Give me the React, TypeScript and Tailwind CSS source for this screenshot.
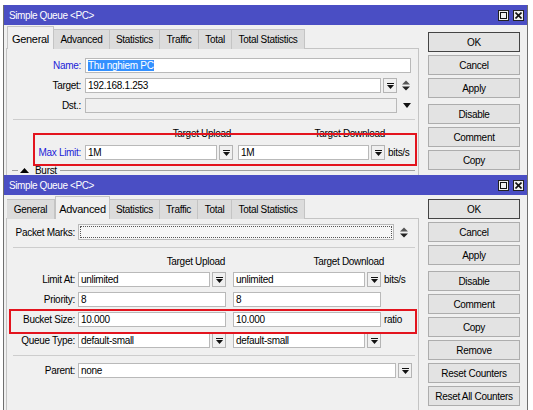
import React from "react";

const blueLabel = "text-[#1c1cd8]";

function DropBtn() {
  return (
    <div className="flex h-[15px] w-[14px] shrink-0 items-center justify-center border border-[#b4b4b4] bg-[#f0f0f0]">
      <svg width="7" height="6" viewBox="0 0 7 6">
        <rect x="0" y="0" width="7" height="1" fill="#111" />
        <path d="M0 2h7L3.5 6z" fill="#111" />
      </svg>
    </div>
  );
}

function UpDown() {
  return (
    <svg width="8" height="11" viewBox="0 0 8 11" className="shrink-0">
      <path d="M0 4.5h8L4 0.5z" fill="#555" />
      <path d="M0 6.5h8L4 10.5z" fill="#222" />
    </svg>
  );
}

function Field({ w, children, gray }: { w: string; children?: React.ReactNode; gray?: boolean }) {
  return (
    <div
      className={`h-[15px] shrink-0 overflow-hidden whitespace-nowrap border border-[#b9b9b9] pl-[2px] leading-[13px] ${gray ? "bg-[#f0f0f0]" : "bg-white"} ${w}`}
    >
      {children}
    </div>
  );
}

function Label({ w, children, blue }: { w: string; children: React.ReactNode; blue?: boolean }) {
  return <div className={`shrink-0 pr-[1px] text-right whitespace-nowrap ${blue ? blueLabel : ""} ${w}`}>{children}</div>;
}

function Tab({ label, w, active }: { label: string; w: string; active?: boolean }) {
  if (active) {
    return (
      <div className={`relative z-10 flex h-[23px] shrink-0 justify-center border-x border-t border-[#c4c4c4] bg-[#f0f0f0] pt-[4px] text-[11px] ${w}`}>
        {label}
      </div>
    );
  }
  return (
    <div className={`flex h-[20px] shrink-0 items-center justify-center border-t border-r border-[#c4c4c4] bg-[#dcdcdc] pb-px ${w}`}>
      {label}
    </div>
  );
}

function TitleBar() {
  return (
    <div className="flex h-[20px] items-center bg-[#4a4ec4] pl-[5px] pr-[3px] text-white tracking-[-0.4px]">
      <span>Simple Queue &lt;PC&gt;</span>
      <div className="ml-auto flex gap-[4px]">
        <div className="flex h-[11px] w-[11px] items-center justify-center border border-[#222] bg-[#f0f0f0]">
          <div className="h-[7px] w-[7px] border border-[#111]" />
        </div>
        <div className="flex h-[11px] w-[11px] items-center justify-center border border-[#222] bg-[#f0f0f0]">
          <svg width="7" height="7" viewBox="0 0 7 7">
            <path d="M0.5 0.5L6.5 6.5M6.5 0.5L0.5 6.5" stroke="#111" strokeWidth="1.6" />
          </svg>
        </div>
      </div>
    </div>
  );
}

function Btn({ children, main, extra }: { children: React.ReactNode; main?: boolean; extra?: boolean }) {
  return (
    <div
      className={`flex h-[20px] w-[92px] items-center justify-center border bg-[#e3e3e3] ${main ? "border-[#444]" : "border-[#adadad]"} ${extra ? "mt-[3px]" : ""}`}
    >
      {children}
    </div>
  );
}

function Sep() {
  return <div className="ml-[6px] mr-[3px] h-px bg-[#cdcdcd]" />;
}

function GeneralWindow() {
  return (
    <div className="h-[170px] w-[525px] overflow-hidden border-x border-[#6f6f6f] bg-[#f0f0f0]">
      <TitleBar />
      <div className="flex">
        <div className="w-[415px] pl-[2px]">
          <div className="flex h-[24px] items-end pl-[1px]">
            <Tab label="General" w="w-[47px]" active />
            <Tab label="Advanced" w="w-[56px]" />
            <Tab label="Statistics" w="w-[50px]" />
            <Tab label="Traffic" w="w-[39px]" />
            <Tab label="Total" w="w-[33px]" />
            <Tab label="Total Statistics" w="w-[73px]" />
          </div>
          <div className="-mt-px h-[200px] w-[413px] border border-[#c4c4c4] bg-[#f0f0f0]">
            <div className="mt-[9px] flex h-[15px] items-center">
              <Label w="w-[75px]" blue>Name:</Label>
              <div className="ml-[3px]">
                <Field w="w-[326px]">
                  <span className="bg-[#3390ff] text-white">Thu nghiem PC</span>
                </Field>
              </div>
            </div>
            <div className="mt-[5px] flex h-[15px] items-center">
              <Label w="w-[75px]">Target:</Label>
              <div className="ml-[3px] flex items-center">
                <Field w="w-[296px]">192.168.1.253</Field>
                <div className="ml-[2px]"><DropBtn /></div>
                <div className="ml-[5px] flex"><UpDown /></div>
              </div>
            </div>
            <div className="mt-[5px] flex h-[15px] items-center">
              <Label w="w-[75px]">Dst.:</Label>
              <div className="ml-[3px] flex items-center">
                <Field w="w-[312px]" gray />
                <svg width="8" height="5" viewBox="0 0 8 5" className="ml-[6px]">
                  <path d="M0 0h8L4 5z" fill="#111" />
                </svg>
              </div>
            </div>
            <div className="mt-[6px]"><Sep /></div>
            <div className="mt-[8px] flex h-[11px] leading-[11px]">
              <div className="ml-[78px] w-[148px] pr-[2px] text-right">Target Upload</div>
              <div className="ml-[5px] w-[147px] text-right">Target Download</div>
            </div>
            <div className="mt-[6px] flex h-[15px] items-center">
              <Label w="w-[75px]" blue>Max Limit:</Label>
              <div className="ml-[3px] flex items-center">
                <Field w="w-[132px]">1M</Field>
                <div className="ml-[2px]"><DropBtn /></div>
                <div className="ml-[5px]"><Field w="w-[131px]">1M</Field></div>
                <div className="ml-[2px]"><DropBtn /></div>
                <span className="ml-[3px]">bits/s</span>
              </div>
            </div>
            <div className="mt-[5px] flex h-[11px] items-center pl-[5px]">
              <div className="h-px w-[6px] bg-[#a0a0a0]" />
              <svg width="9" height="5" viewBox="0 0 9 5" className="ml-[2px]">
                <path d="M0 5h9L4.5 0z" fill="#000" />
              </svg>
              <span className="ml-[6px] leading-[11px]">Burst</span>
              <div className="ml-[3px] mr-[3px] h-px flex-1 bg-[#a0a0a0]" />
            </div>
          </div>
        </div>
        <div className="ml-[9px] mt-[7px] flex flex-col gap-[3px]">
          <Btn main>OK</Btn>
          <Btn>Cancel</Btn>
          <Btn>Apply</Btn>
          <Btn extra>Disable</Btn>
          <Btn>Comment</Btn>
          <Btn>Copy</Btn>
        </div>
      </div>
    </div>
  );
}

function AdvancedWindow() {
  return (
    <div className="h-[235px] w-[525px] overflow-hidden border-x border-[#6f6f6f] bg-[#f0f0f0]">
      <TitleBar />
      <div className="flex">
        <div className="w-[415px] pl-[2px]">
          <div className="flex h-[24px] items-end pl-[1px]">
            <Tab label="General" w="w-[48px]" />
            <Tab label="Advanced" w="w-[55px]" active />
            <Tab label="Statistics" w="w-[50px]" />
            <Tab label="Traffic" w="w-[38px]" />
            <Tab label="Total" w="w-[34px]" />
            <Tab label="Total Statistics" w="w-[73px]" />
          </div>
          <div className="-mt-px h-[220px] w-[413px] border border-[#c4c4c4] bg-[#f0f0f0]">
            <div className="mt-[5px] flex h-[16px] items-center">
              <Label w="w-[69px]">Packet Marks:</Label>
              <div className="ml-[2px] flex items-center">
                <div className="h-[16px] w-[316px] border border-[#b9b9b9] bg-[#f6f6f6] p-px">
                  <div className="h-full w-full border border-dotted border-[#555]" />
                </div>
                <div className="ml-[6px] flex"><UpDown /></div>
              </div>
            </div>
            <div className="mt-[7px]"><Sep /></div>
            <div className="mt-[8px] flex h-[11px] leading-[11px]">
              <div className="ml-[71px] w-[148px] pr-px text-right">Target Upload</div>
              <div className="ml-[7px] w-[151px] text-right">Target Download</div>
            </div>
            <div className="mt-[5px] flex h-[15px] items-center">
              <Label w="w-[69px]">Limit At:</Label>
              <div className="ml-[2px] flex items-center">
                <Field w="w-[132px]">unlimited</Field>
                <div className="ml-[2px]"><DropBtn /></div>
                <div className="ml-[7px]"><Field w="w-[132px]">unlimited</Field></div>
                <div className="ml-[2px]"><DropBtn /></div>
                <span className="ml-[3px]">bits/s</span>
              </div>
            </div>
            <div className="mt-[5px] flex h-[15px] items-center">
              <Label w="w-[69px]">Priority:</Label>
              <div className="ml-[2px] flex items-center">
                <Field w="w-[148px]">8</Field>
                <div className="ml-[7px]"><Field w="w-[148px]">8</Field></div>
              </div>
            </div>
            <div className="mt-[5px] flex h-[15px] items-center">
              <Label w="w-[69px]">Bucket Size:</Label>
              <div className="ml-[2px] flex items-center">
                <Field w="w-[148px]">10.000</Field>
                <div className="ml-[7px]"><Field w="w-[148px]">10.000</Field></div>
                <span className="ml-[3px]">ratio</span>
              </div>
            </div>
            <div className="mt-[6px] flex h-[15px] items-center">
              <Label w="w-[69px]">Queue Type:</Label>
              <div className="ml-[2px] flex items-center">
                <Field w="w-[132px]">default-small</Field>
                <div className="ml-[2px]"><DropBtn /></div>
                <div className="ml-[7px]"><Field w="w-[132px]">default-small</Field></div>
                <div className="ml-[2px]"><DropBtn /></div>
              </div>
            </div>
            <div className="mt-[7px]"><Sep /></div>
            <div className="mt-[7px] flex h-[15px] items-center">
              <Label w="w-[69px]">Parent:</Label>
              <div className="ml-[2px] flex items-center">
                <Field w="w-[318px]">none</Field>
                <div className="ml-[2px]"><DropBtn /></div>
              </div>
            </div>
          </div>
        </div>
        <div className="ml-[9px] mt-[4px] flex flex-col gap-[3px]">
          <Btn main>OK</Btn>
          <Btn>Cancel</Btn>
          <Btn>Apply</Btn>
          <Btn extra>Disable</Btn>
          <Btn>Comment</Btn>
          <Btn>Copy</Btn>
          <Btn>Remove</Btn>
          <Btn>Reset Counters</Btn>
          <Btn>Reset All Counters</Btn>
        </div>
      </div>
    </div>
  );
}

export default function App() {
  return (
    <div className="relative h-[410px] w-[533px] overflow-hidden bg-white pl-[3px] pt-[5px] font-['Liberation_Sans',Arial,sans-serif] text-[10px] tracking-[-0.3px] text-black">
      <GeneralWindow />
      <AdvancedWindow />
      {/* red highlight boxes drawn over the screenshot */}
      <div className="pointer-events-none absolute left-[33px] top-[133px] z-20 h-[33px] w-[384px] border-2 border-[#e3141e]" />
      <div className="pointer-events-none absolute left-[9px] top-[309px] z-20 h-[25px] w-[408px] border-2 border-[#e3141e]" />
    </div>
  );
}
